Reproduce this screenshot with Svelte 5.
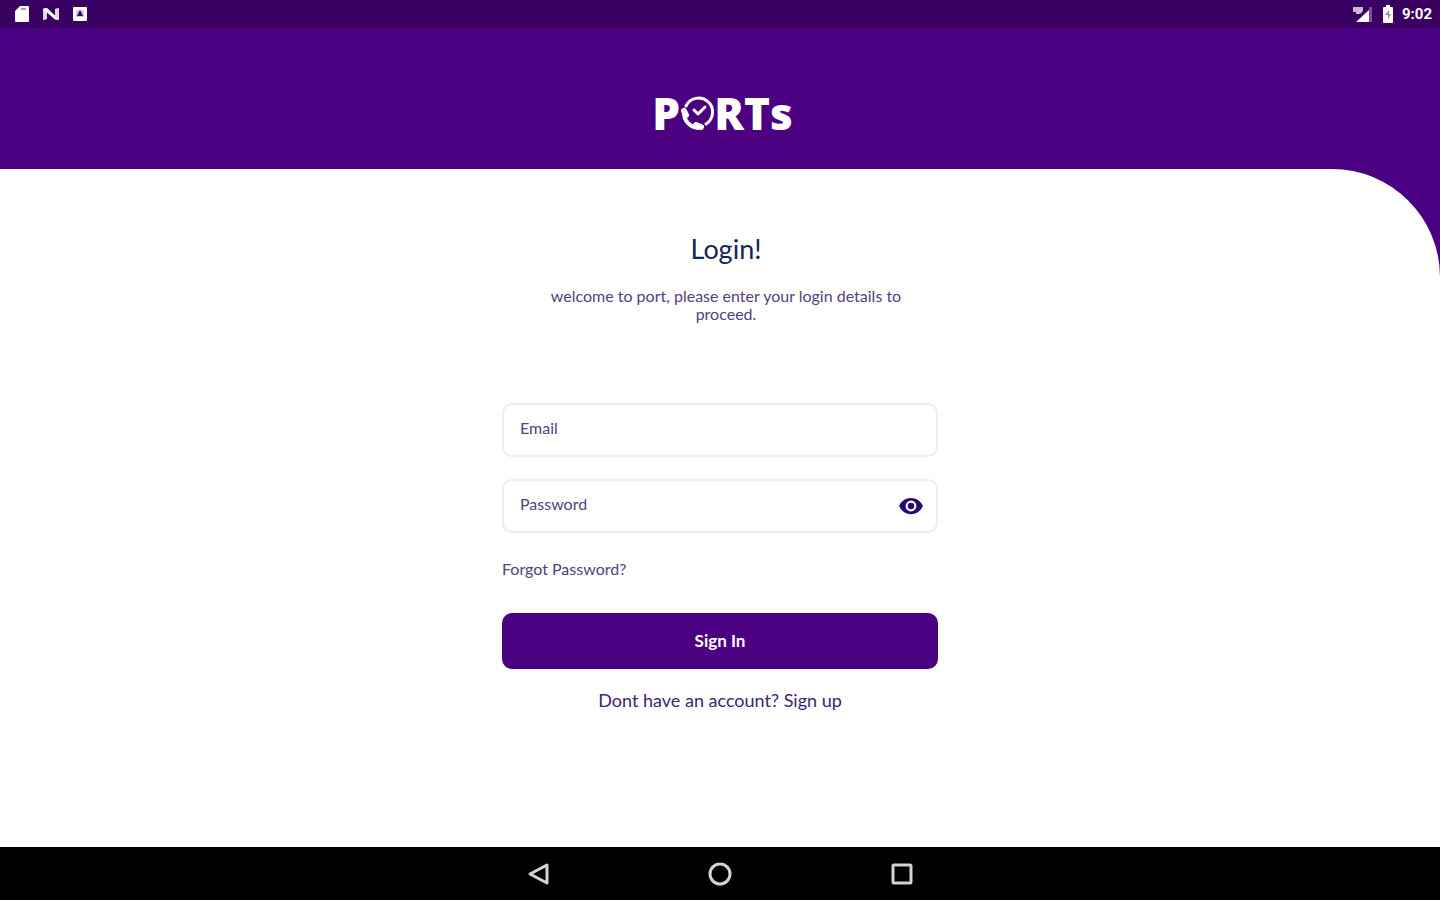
<script>
  let email = $state('');
  let password = $state('');
  let visible = $state(false);
</script>

<div class="screen">
  <div class="status">
    <div class="group">
      <svg width="16" height="20" viewBox="0 0 16 20" aria-hidden="true">
        <path d="M6 2h8q1 0 1 1v14q0 1-1 1H2q-1 0-1-1V7z" fill="#fff" />
        <path d="M7 5h5" stroke="#a89abb" stroke-width="2" />
      </svg>
      <svg width="18" height="20" viewBox="0 0 18 20" aria-hidden="true">
        <path d="M1 4.500 L5 4 L13 11.500 V5 L17 4 V16 L13 15.500 L5 8.500 V15 L1 16z" fill="#fff" />
        <path d="M1 5l4 3.500V15l-4 1zM13 5l4-1v12l-4-4.500z" fill="#bfaed0" opacity=".5" />
      </svg>
      <svg width="16" height="20" viewBox="0 0 16 20" aria-hidden="true">
        <rect x="1" y="3" width="14" height="14" rx="1" fill="#fff" />
        <path d="M4 6h8v7H4z" fill="#d6cbe0" />
        <path d="M8 6l3 6H5z" fill="#3a0061" />
      </svg>
    </div>
    <div class="group right">
      <svg width="22" height="20" viewBox="0 0 22 20" aria-hidden="true">
        <path d="M17 3h3v15h-3z" fill="#7b4d99" />
        <path d="M4 18L17 6v12z" fill="#fff" />
        <path d="M1 3h10v4l-3 3H4V8H1z" fill="#c9bbd6" />
      </svg>
      <svg width="12" height="20" viewBox="0 0 12 20" aria-hidden="true">
        <path d="M4 1h4v2h2q1 0 1 1v14q0 1-1 1H2q-1 0-1-1V4q0-1 1-1h2z" fill="#fff" />
        <path d="M7 6l-4 5h3v4l3-5H7z" fill="#9a85ad" />
      </svg>
      <span class="clock">9:02</span>
    </div>
  </div>

  <header>
    <div class="logo">
      <span>P</span>
      <svg width="34" height="38" viewBox="0 0 34 38" fill="none" stroke="#fff" stroke-linecap="round" aria-hidden="true">
        <path d="M6 12A14 14 0 1 1 26 30" stroke-width="3" />
        <path d="M4 19C4 27 10 33 18 34" stroke-width="4" />
        <path d="M4 17l2 4M16 31l5 2" stroke-width="6" />
        <path d="M14 16l4 4 7-7" stroke-width="3" stroke-linejoin="round" />
      </svg>
      <span>RTs</span>
    </div>
  </header>

  <div class="backdrop">
    <main>
      <div class="intro">
        <h1>Login!</h1>
        <p>welcome to port, please enter your login details to proceed.</p>
      </div>
      <form onsubmit={(e) => e.preventDefault()}>
        <div class="field">
          <input type="email" aria-label="Email" placeholder="Email" bind:value={email} />
        </div>
        <div class="field">
          <input type={visible ? 'text' : 'password'} aria-label="Password" placeholder="Password" bind:value={password} />
          <button class="eye" type="button" aria-label="Show password" onclick={() => (visible = !visible)}>
            <svg width="26" height="26" viewBox="0 0 24 24" aria-hidden="true">
              <path fill="#2c0873" d="M12 4.500C7 4.500 2.730 7.610 1 12c1.730 4.390 6 7.500 11 7.500s9.270-3.110 11-7.500c-1.730-4.390-6-7.500-11-7.500zM12 17a5 5 0 1 1 0-10 5 5 0 0 1 0 10zm0-8a3 3 0 1 0 0 6 3 3 0 0 0 0-6z" />
            </svg>
          </button>
        </div>
        <a class="forgot" href="#forgot">Forgot Password?</a>
        <button class="submit" type="submit">Sign In</button>
      </form>
      <p class="signup">Dont have an account? <a href="#signup">Sign up</a></p>
    </main>
  </div>

  <nav aria-label="System">
    <button aria-label="Back">
      <svg width="24" height="24" viewBox="0 0 24 24"><path d="M21 3v18L4 12z" /></svg>
    </button>
    <button aria-label="Home">
      <svg width="24" height="24" viewBox="0 0 24 24"><circle cx="12" cy="12" r="10" /></svg>
    </button>
    <button aria-label="Recent apps">
      <svg width="24" height="24" viewBox="0 0 24 24"><rect x="3" y="3" width="18" height="18" rx="1" /></svg>
    </button>
  </nav>
</div>

<style>
  :global(body) {
    margin: 0;
  }
  .screen {
    min-height: 100vh;
    display: flex;
    flex-direction: column;
    font-family: Lato, sans-serif;
    color: #3d2474;
    background: #4b0082;
  }
  .status {
    height: 28px;
    padding: 0 8px 0 14px;
    display: flex;
    align-items: center;
    justify-content: space-between;
    background: #3a0061;
  }
  .group {
    display: flex;
    align-items: center;
    gap: 12px;
  }
  .right {
    gap: 8px;
  }
  svg {
    display: block;
  }
  .clock {
    font: 700 15px Roboto, sans-serif;
    color: #fff;
  }
  header {
    height: 141px;
    box-sizing: border-box;
    padding: 63px 0 0 5px;
    display: flex;
    justify-content: center;
  }
  .logo {
    height: 44px;
    display: flex;
    align-items: center;
    font: 800 44px/44px "Open Sans", sans-serif;
    color: #fff;
  }
  .backdrop {
    flex: 1;
    display: flex;
    background: #4b0082;
  }
  main {
    flex: 1;
    display: flex;
    flex-direction: column;
    align-items: center;
    padding: 64px 24px 24px;
    background: #fff;
    border-top-right-radius: 108px;
  }
  .intro {
    max-width: 400px;
    padding-left: 12px;
    text-align: center;
  }
  h1 {
    margin: 0 0 22px;
    font-size: 27px;
    line-height: 32px;
    font-weight: 400;
    color: #0f2a4f;
  }
  p {
    margin: 0;
    font-size: 16px;
    line-height: 18px;
    color: #54407f;
  }
  form {
    width: 100%;
    max-width: 436px;
    margin-top: 80px;
    display: flex;
    flex-direction: column;
  }
  .field {
    height: 54px;
    margin-bottom: 22px;
    box-sizing: border-box;
    display: flex;
    align-items: center;
    border: 2px solid #eeeef0;
    border-radius: 10px;
    padding: 0 12px 0 16px;
  }
  input {
    flex: 1;
    min-width: 0;
    border: 0;
    outline: 0;
    padding: 0 0 4px;
    background: none;
    font: 16px/20px Lato, sans-serif;
    color: inherit;
  }
  input::placeholder {
    color: #54407f;
    opacity: 1;
  }
  button {
    border: 0;
    padding: 0;
    background: none;
    cursor: pointer;
  }
  a {
    color: inherit;
    text-decoration: none;
  }
  .forgot {
    align-self: flex-start;
    margin: 4px 0 34px;
    font-size: 16px;
    line-height: 20px;
    color: #54407f;
  }
  .submit {
    height: 56px;
    border-radius: 10px;
    background: #4b0082;
    font: 700 17px/20px Lato, sans-serif;
    color: #fff;
  }
  .signup {
    margin-top: 21px;
    font-size: 18px;
    line-height: 20px;
    color: #3d2474;
  }
  nav {
    height: 53px;
    display: flex;
    align-items: center;
    justify-content: center;
    gap: 158px;
    background: #000;
  }
  nav svg {
    fill: none;
    stroke: #d4d4d4;
    stroke-width: 3;
    stroke-linejoin: round;
  }
</style>
